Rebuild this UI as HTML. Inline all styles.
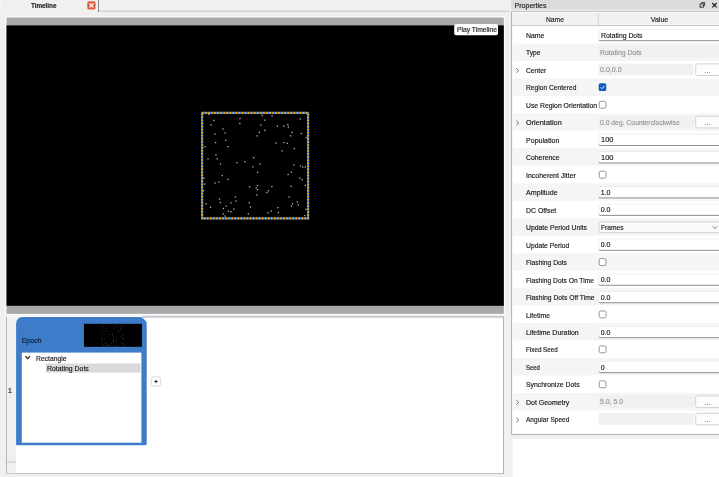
<!DOCTYPE html><html><head><meta charset="utf-8"><title>Timeline</title><style>*{box-sizing:border-box;margin:0;padding:0}
html,body{width:719px;height:477px;overflow:hidden;background:#f0f0f0}
body{position:relative;font-family:"Liberation Sans",sans-serif;font-size:7px;color:#161616;line-height:1;-webkit-text-stroke:0.15px currentColor}
.bg{position:absolute;left:0;top:0}
.txt{position:absolute;left:0;top:0;width:719px;height:477px;will-change:transform}
.t{position:absolute;white-space:nowrap;font-size:7px;transform-origin:0 50%}
.tabt{left:31.1px;top:2.2px;font-weight:bold;color:#222;transform:scaleX(.9)}
.playt{left:456.6px;top:26.2px;color:#1a1a1a;transform:scaleX(.963)}
.epocht{left:21.7px;top:337px;color:#0c1a30}
.r1{left:35.6px;top:354.6px;transform:scaleX(.965)}
.r2{left:47.4px;top:364.8px;transform:scaleX(.985)}
.one{left:8px;top:386.6px}
.dots{position:absolute;left:0;top:0;pointer-events:none}
/* properties */
.lbl{left:525.6px;color:#161616}
.val{left:600.7px;color:#161616}
.val.off{left:600.4px;color:#8e8e8e;-webkit-text-stroke:0.1px currentColor}
.dots3{left:704.3px;color:#6a6a6a;letter-spacing:0.2px;margin-top:0.4px}
</style></head><body>
<svg class="bg" width="719" height="477" viewBox="0 0 719 477">
<!-- tab bar -->
<rect x="98" y="10.6" width="411.5" height="1.2" fill="#cdcdcd"/>
<rect x="98" y="0" width="1" height="12" fill="#8c8c8c"/>
<rect x="1" y="0" width="1" height="11.5" fill="#fbfbfb"/>
<!-- tab close icon -->
<rect x="87.3" y="1.3" width="8.3" height="8.3" rx="1.6" fill="#e2623f"/>
<path d="M89.5 3.5 L93.4 7.4 M93.4 3.5 L89.5 7.4" stroke="#fff" stroke-width="1.25" fill="none"/>
<!-- preview frame -->
<rect x="5.5" y="16.5" width="499.5" height="298.5" fill="#fdfdfd"/>
<rect x="6.5" y="17.5" width="497.3" height="296.4" fill="#a9a9a9"/>
<rect x="6.5" y="25.4" width="497.3" height="280.4" fill="#000"/>
<!-- play button -->
<rect x="454.2" y="24" width="43.8" height="11.2" rx="2" fill="#fff"/>
<!-- square -->
<rect x="202.1" y="112.9" width="106" height="105.5" fill="none" stroke="#2f7de0" stroke-width="2.1"/>
<rect x="202.1" y="112.9" width="106" height="105.5" fill="none" stroke="#f5a50a" stroke-width="2.1" stroke-dasharray="1.55 1.5"/>
<!-- timeline panel -->
<rect x="6.2" y="316" width="497.7" height="157.9" fill="#a9abb3"/>
<rect x="6.2" y="315.9" width="497.7" height="1" fill="#cfd2d9"/>
<rect x="6.2" y="316.8" width="497.7" height="0.8" fill="#b9bcc5"/>
<rect x="7" y="317.6" width="496" height="155.6" fill="#fff"/>
<rect x="7" y="317.6" width="9" height="155.6" fill="#f0f0f0"/>
<rect x="7" y="461.6" width="9" height="0.8" fill="#b8b8b8"/>
<!-- epoch -->
<rect x="7" y="315.7" width="135" height="2" fill="#fbfbfb"/>
<path d="M16.1 445.2 V324 Q16.1 317 23 317 H140.2 Q143.5 317.6 146.7 322.6 V443.7 Q146.7 445.2 145.2 445.2 Z" fill="#3e7cc9"/>
<rect x="83.9" y="323.8" width="58" height="23" fill="#000"/>
<rect x="21.8" y="352.6" width="119.6" height="90.1" fill="#fff"/>
<rect x="45.7" y="363.5" width="94.8" height="9.1" fill="#d9d9d9"/>
<path d="M25.4 356.1 L27.7 358.6 L30 356.1" fill="none" stroke="#1a1a1a" stroke-width="1.2"/>
<!-- plus button -->
<rect x="151.3" y="376.8" width="9.3" height="9.3" rx="1.8" fill="#fff" stroke="#cfcfcf" stroke-width="0.8"/>
<path d="M154.3 381.5 H157.7 M156 379.8 V383.2" stroke="#222" stroke-width="0.9"/>
</svg>
<div class="txt">
<b class="t tabt">Timeline</b>
<span class="t playt">Play Timeline</span>
<span class="t epocht">Epoch</span>
<span class="t r1">Rectangle</span>
<span class="t r2">Rotating Dots</span>
<span class="t one">1</span>

<svg class="dots" width="719" height="477" viewBox="0 0 719 477"><rect x="208.4" y="113.8" width="1.3" height="1.3" fill="#b4b4b4"/><rect x="213.3" y="119.9" width="1.3" height="1.3" fill="#b4b4b4"/><rect x="210.4" y="124.3" width="1.3" height="1.3" fill="#b4b4b4"/><rect x="239.4" y="117.8" width="1.3" height="1.3" fill="#b4b4b4"/><rect x="239.2" y="122.8" width="1.3" height="1.3" fill="#b4b4b4"/><rect x="222.2" y="128.3" width="1.3" height="1.3" fill="#b4b4b4"/><rect x="224.5" y="132.2" width="1.3" height="1.3" fill="#b4b4b4"/><rect x="214.3" y="133.3" width="1.3" height="1.3" fill="#b4b4b4"/><rect x="256.5" y="135.2" width="1.3" height="1.3" fill="#b4b4b4"/><rect x="225.2" y="139.7" width="1.3" height="1.3" fill="#b4b4b4"/><rect x="214.9" y="141.9" width="1.3" height="1.3" fill="#b4b4b4"/><rect x="204.2" y="146.0" width="1.3" height="1.3" fill="#b4b4b4"/><rect x="227.2" y="146.0" width="1.3" height="1.3" fill="#b4b4b4"/><rect x="215.3" y="154.2" width="1.3" height="1.3" fill="#b4b4b4"/><rect x="207.4" y="158.2" width="1.3" height="1.3" fill="#b4b4b4"/><rect x="216.5" y="158.2" width="1.3" height="1.3" fill="#b4b4b4"/><rect x="253.0" y="157.0" width="1.3" height="1.3" fill="#b4b4b4"/><rect x="244.2" y="161.0" width="1.3" height="1.3" fill="#b4b4b4"/><rect x="236.3" y="162.0" width="1.3" height="1.3" fill="#b4b4b4"/><rect x="219.8" y="163.5" width="1.3" height="1.3" fill="#b4b4b4"/><rect x="252.3" y="166.2" width="1.3" height="1.3" fill="#b4b4b4"/><rect x="261.6" y="114.8" width="1.3" height="1.3" fill="#b4b4b4"/><rect x="271.5" y="115.1" width="1.3" height="1.3" fill="#b4b4b4"/><rect x="264.1" y="119.5" width="1.3" height="1.3" fill="#b4b4b4"/><rect x="299.6" y="118.2" width="1.3" height="1.3" fill="#b4b4b4"/><rect x="260.2" y="124.3" width="1.3" height="1.3" fill="#b4b4b4"/><rect x="276.7" y="125.5" width="1.3" height="1.3" fill="#b4b4b4"/><rect x="283.2" y="125.5" width="1.3" height="1.3" fill="#b4b4b4"/><rect x="287.2" y="124.0" width="1.3" height="1.3" fill="#b4b4b4"/><rect x="287.7" y="126.4" width="1.3" height="1.3" fill="#b4b4b4"/><rect x="264.2" y="129.7" width="1.3" height="1.3" fill="#b4b4b4"/><rect x="258.7" y="131.7" width="1.3" height="1.3" fill="#b4b4b4"/><rect x="291.4" y="131.7" width="1.3" height="1.3" fill="#b4b4b4"/><rect x="300.6" y="132.8" width="1.3" height="1.3" fill="#b4b4b4"/><rect x="289.9" y="135.2" width="1.3" height="1.3" fill="#b4b4b4"/><rect x="305.6" y="136.9" width="1.3" height="1.3" fill="#b4b4b4"/><rect x="275.2" y="142.5" width="1.3" height="1.3" fill="#b4b4b4"/><rect x="283.2" y="141.9" width="1.3" height="1.3" fill="#b4b4b4"/><rect x="286.6" y="142.7" width="1.3" height="1.3" fill="#b4b4b4"/><rect x="293.7" y="147.9" width="1.3" height="1.3" fill="#b4b4b4"/><rect x="281.5" y="150.2" width="1.3" height="1.3" fill="#b4b4b4"/><rect x="259.2" y="163.3" width="1.3" height="1.3" fill="#b4b4b4"/><rect x="293.2" y="164.2" width="1.3" height="1.3" fill="#b4b4b4"/><rect x="299.9" y="165.2" width="1.3" height="1.3" fill="#b4b4b4"/><rect x="302.1" y="166.4" width="1.3" height="1.3" fill="#b4b4b4"/><rect x="304.6" y="166.4" width="1.3" height="1.3" fill="#b4b4b4"/><rect x="256.9" y="171.8" width="1.3" height="1.3" fill="#b4b4b4"/><rect x="221.5" y="174.9" width="1.3" height="1.3" fill="#b4b4b4"/><rect x="203.3" y="177.4" width="1.3" height="1.3" fill="#b4b4b4"/><rect x="227.2" y="178.8" width="1.3" height="1.3" fill="#b4b4b4"/><rect x="214.3" y="182.4" width="1.3" height="1.3" fill="#b4b4b4"/><rect x="218.2" y="181.5" width="1.3" height="1.3" fill="#b4b4b4"/><rect x="204.2" y="183.4" width="1.3" height="1.3" fill="#b4b4b4"/><rect x="248.9" y="186.2" width="1.3" height="1.3" fill="#b4b4b4"/><rect x="256.8" y="184.9" width="1.3" height="1.3" fill="#b4b4b4"/><rect x="255.5" y="187.2" width="1.3" height="1.3" fill="#b4b4b4"/><rect x="256.9" y="188.8" width="1.3" height="1.3" fill="#b4b4b4"/><rect x="203.0" y="190.2" width="1.3" height="1.3" fill="#b4b4b4"/><rect x="256.2" y="194.4" width="1.3" height="1.3" fill="#b4b4b4"/><rect x="234.8" y="196.3" width="1.3" height="1.3" fill="#b4b4b4"/><rect x="218.9" y="198.4" width="1.3" height="1.3" fill="#b4b4b4"/><rect x="235.3" y="200.4" width="1.3" height="1.3" fill="#b4b4b4"/><rect x="219.7" y="201.9" width="1.3" height="1.3" fill="#b4b4b4"/><rect x="230.3" y="202.2" width="1.3" height="1.3" fill="#b4b4b4"/><rect x="248.7" y="201.9" width="1.3" height="1.3" fill="#b4b4b4"/><rect x="205.5" y="203.2" width="1.3" height="1.3" fill="#b4b4b4"/><rect x="225.4" y="205.4" width="1.3" height="1.3" fill="#b4b4b4"/><rect x="249.8" y="206.3" width="1.3" height="1.3" fill="#b4b4b4"/><rect x="209.9" y="206.7" width="1.3" height="1.3" fill="#b4b4b4"/><rect x="222.8" y="207.8" width="1.3" height="1.3" fill="#b4b4b4"/><rect x="233.2" y="208.5" width="1.3" height="1.3" fill="#b4b4b4"/><rect x="227.8" y="210.4" width="1.3" height="1.3" fill="#b4b4b4"/><rect x="230.4" y="211.0" width="1.3" height="1.3" fill="#b4b4b4"/><rect x="222.5" y="213.2" width="1.3" height="1.3" fill="#b4b4b4"/><rect x="247.7" y="213.2" width="1.3" height="1.3" fill="#b4b4b4"/><rect x="224.3" y="215.4" width="1.3" height="1.3" fill="#b4b4b4"/><rect x="290.8" y="171.5" width="1.3" height="1.3" fill="#b4b4b4"/><rect x="287.5" y="173.9" width="1.3" height="1.3" fill="#b4b4b4"/><rect x="299.2" y="177.4" width="1.3" height="1.3" fill="#b4b4b4"/><rect x="301.5" y="179.0" width="1.3" height="1.3" fill="#b4b4b4"/><rect x="271.2" y="185.9" width="1.3" height="1.3" fill="#b4b4b4"/><rect x="290.5" y="185.7" width="1.3" height="1.3" fill="#b4b4b4"/><rect x="304.6" y="184.8" width="1.3" height="1.3" fill="#b4b4b4"/><rect x="267.9" y="190.2" width="1.3" height="1.3" fill="#b4b4b4"/><rect x="266.2" y="191.9" width="1.3" height="1.3" fill="#b4b4b4"/><rect x="288.5" y="196.3" width="1.3" height="1.3" fill="#b4b4b4"/><rect x="296.7" y="201.3" width="1.3" height="1.3" fill="#b4b4b4"/><rect x="291.8" y="203.2" width="1.3" height="1.3" fill="#b4b4b4"/><rect x="297.7" y="204.2" width="1.3" height="1.3" fill="#b4b4b4"/><rect x="290.8" y="205.4" width="1.3" height="1.3" fill="#b4b4b4"/><rect x="277.2" y="207.0" width="1.3" height="1.3" fill="#b4b4b4"/><rect x="270.6" y="210.4" width="1.3" height="1.3" fill="#b4b4b4"/><rect x="267.5" y="212.2" width="1.3" height="1.3" fill="#b4b4b4"/><rect x="277.8" y="211.8" width="1.3" height="1.3" fill="#b4b4b4"/><rect x="305.2" y="208.7" width="1.3" height="1.3" fill="#b4b4b4"/><rect x="304.2" y="214.9" width="1.3" height="1.3" fill="#b4b4b4"/><rect x="102.67" y="323.96" width="0.7" height="0.7" fill="#fff" fill-opacity="0.3"/><rect x="103.10" y="326.24" width="0.7" height="0.7" fill="#fff" fill-opacity="0.3"/><rect x="109.33" y="325.91" width="0.7" height="0.7" fill="#fff" fill-opacity="0.3"/><rect x="106.16" y="327.93" width="0.7" height="0.7" fill="#fff" fill-opacity="0.3"/><rect x="113.08" y="328.58" width="0.7" height="0.7" fill="#fff" fill-opacity="0.3"/><rect x="104.08" y="330.06" width="0.7" height="0.7" fill="#fff" fill-opacity="0.3"/><rect x="106.75" y="330.95" width="0.7" height="0.7" fill="#fff" fill-opacity="0.3"/><rect x="102.45" y="333.60" width="0.7" height="0.7" fill="#fff" fill-opacity="0.3"/><rect x="112.35" y="333.34" width="0.7" height="0.7" fill="#fff" fill-opacity="0.3"/><rect x="108.72" y="334.42" width="0.7" height="0.7" fill="#fff" fill-opacity="0.3"/><rect x="112.19" y="335.33" width="0.7" height="0.7" fill="#fff" fill-opacity="0.3"/><rect x="116.34" y="324.24" width="0.7" height="0.7" fill="#fff" fill-opacity="0.3"/><rect x="122.44" y="324.92" width="0.7" height="0.7" fill="#fff" fill-opacity="0.3"/><rect x="117.47" y="326.50" width="0.7" height="0.7" fill="#fff" fill-opacity="0.3"/><rect x="119.75" y="326.17" width="0.7" height="0.7" fill="#fff" fill-opacity="0.3"/><rect x="114.78" y="327.39" width="0.7" height="0.7" fill="#fff" fill-opacity="0.3"/><rect x="120.66" y="327.82" width="0.7" height="0.7" fill="#fff" fill-opacity="0.3"/><rect x="120.33" y="328.58" width="0.7" height="0.7" fill="#fff" fill-opacity="0.3"/><rect x="117.14" y="330.19" width="0.7" height="0.7" fill="#fff" fill-opacity="0.3"/><rect x="119.62" y="330.21" width="0.7" height="0.7" fill="#fff" fill-opacity="0.3"/><rect x="118.51" y="331.86" width="0.7" height="0.7" fill="#fff" fill-opacity="0.3"/><rect x="121.07" y="334.90" width="0.7" height="0.7" fill="#fff" fill-opacity="0.3"/><rect x="122.98" y="335.38" width="0.7" height="0.7" fill="#fff" fill-opacity="0.3"/><rect x="113.17" y="336.53" width="0.7" height="0.7" fill="#fff" fill-opacity="0.3"/><rect x="101.56" y="337.76" width="0.7" height="0.7" fill="#fff" fill-opacity="0.3"/><rect x="103.95" y="338.85" width="0.7" height="0.7" fill="#fff" fill-opacity="0.3"/><rect x="101.76" y="339.06" width="0.7" height="0.7" fill="#fff" fill-opacity="0.3"/><rect x="113.15" y="339.39" width="0.7" height="0.7" fill="#fff" fill-opacity="0.3"/><rect x="113.17" y="340.21" width="0.7" height="0.7" fill="#fff" fill-opacity="0.3"/><rect x="113.04" y="341.45" width="0.7" height="0.7" fill="#fff" fill-opacity="0.3"/><rect x="104.95" y="342.32" width="0.7" height="0.7" fill="#fff" fill-opacity="0.3"/><rect x="105.10" y="343.08" width="0.7" height="0.7" fill="#fff" fill-opacity="0.3"/><rect x="111.39" y="343.08" width="0.7" height="0.7" fill="#fff" fill-opacity="0.3"/><rect x="106.36" y="343.84" width="0.7" height="0.7" fill="#fff" fill-opacity="0.3"/><rect x="102.99" y="344.10" width="0.7" height="0.7" fill="#fff" fill-opacity="0.3"/><rect x="108.03" y="344.51" width="0.7" height="0.7" fill="#fff" fill-opacity="0.3"/><rect x="107.44" y="345.05" width="0.7" height="0.7" fill="#fff" fill-opacity="0.3"/><rect x="111.17" y="345.53" width="0.7" height="0.7" fill="#fff" fill-opacity="0.3"/><rect x="120.53" y="336.48" width="0.7" height="0.7" fill="#fff" fill-opacity="0.3"/><rect x="122.35" y="337.76" width="0.7" height="0.7" fill="#fff" fill-opacity="0.3"/><rect x="116.30" y="339.61" width="0.7" height="0.7" fill="#fff" fill-opacity="0.3"/><rect x="123.52" y="339.35" width="0.7" height="0.7" fill="#fff" fill-opacity="0.3"/><rect x="115.19" y="340.91" width="0.7" height="0.7" fill="#fff" fill-opacity="0.3"/><rect x="121.81" y="342.95" width="0.7" height="0.7" fill="#fff" fill-opacity="0.3"/><rect x="122.02" y="343.56" width="0.7" height="0.7" fill="#fff" fill-opacity="0.3"/><rect x="117.58" y="344.19" width="0.7" height="0.7" fill="#fff" fill-opacity="0.3"/><rect x="115.47" y="345.31" width="0.7" height="0.7" fill="#fff" fill-opacity="0.3"/><rect x="123.65" y="344.53" width="0.7" height="0.7" fill="#fff" fill-opacity="0.3"/><rect x="101.6" y="324.1" width="22.8" height="22.6" fill="none" stroke="#a08040" stroke-opacity="0.1" stroke-width="0.5"/></svg>
<svg class="bg" width="719" height="477" viewBox="0 0 719 477">
<!-- title bar -->
<rect x="511.2" y="0" width="208" height="9.7" fill="#dcdcdc"/>
<path d="M701.7 3.6 V2.5 H704.6 V5.6 H703.4" fill="none" stroke="#2a2a2a" stroke-width="0.9"/>
<rect x="700.1" y="3.9" width="3.2" height="3.3" fill="none" stroke="#2a2a2a" stroke-width="0.9"/>
<path d="M712.3 3 L716.6 7.3 M716.6 3 L712.3 7.3" stroke="#1e1e1e" stroke-width="1.15" fill="none"/>
<!-- table frame -->
<rect x="511.2" y="11.2" width="210" height="423.6" fill="#a4a7ae"/>
<rect x="511.2" y="10.8" width="210" height="1.6" fill="#c6c9d1"/>
<rect x="512.1" y="12.1" width="209" height="421.8" fill="#fff"/>
<!-- header -->
<rect x="512.1" y="13.2" width="207" height="11.5" fill="#f1f1f1"/>
<rect x="512.1" y="25" width="207" height="1" fill="#c9c9c9"/>
<rect x="597.8" y="12.9" width="1" height="12.1" fill="#d4d4d4"/>
<!-- description box -->
<rect x="511.6" y="437.6" width="210" height="45" fill="#e6e6e6"/>
<rect x="512.4" y="438.4" width="210" height="45" fill="#fff"/>

<rect x="598.6" y="29.05" width="125" height="12.0" rx="1.5" fill="#e6e6e6"/>
<rect x="599.3" y="29.65" width="125" height="10.9" rx="1" fill="#fff"/>
<path d="M598.9 39.80 q0.3 0.9 1.3 0.9 H722" fill="none" stroke="#8a8a8a" stroke-width="0.95"/>
<rect x="512.1" y="43.52" width="207" height="17.47" fill="#f5f5f5"/>
<rect x="598.6" y="46.12" width="125" height="11.8" fill="#f0f0f0"/>
<path d="M516.3 68.29 L518.7 70.59 L516.3 72.89" fill="none" stroke="#686868" stroke-width="0.95"/>
<rect x="598.6" y="63.59" width="95.1" height="11.8" fill="#f0f0f0"/>
<rect x="695.7" y="63.89" width="26" height="11.6" rx="2" fill="#fdfdfd" stroke="#cdcdcd" stroke-width="0.9"/>
<rect x="512.1" y="78.46" width="207" height="17.47" fill="#f5f5f5"/>
<rect x="598.7" y="83.36" width="7.6" height="7.7" rx="1.6" fill="#0b5fc0"/>
<path d="M600.60 87.36 l1.35 1.35 l2.5 -2.8" fill="none" stroke="#fff" stroke-width="0.9"/>
<rect x="599.2" y="101.33" width="6.8" height="6.9" rx="1.5" fill="#fff" stroke="#8a8a8a" stroke-width="0.9"/>
<rect x="512.1" y="113.40" width="207" height="17.47" fill="#f5f5f5"/>
<path d="M516.3 120.70 L518.7 123.00 L516.3 125.30" fill="none" stroke="#686868" stroke-width="0.95"/>
<rect x="598.6" y="116.00" width="95.1" height="11.8" fill="#f0f0f0"/>
<rect x="695.7" y="116.30" width="26" height="11.6" rx="2" fill="#fdfdfd" stroke="#cdcdcd" stroke-width="0.9"/>
<rect x="598.6" y="133.87" width="125" height="12.0" rx="1.5" fill="#e6e6e6"/>
<rect x="599.3" y="134.47" width="125" height="10.9" rx="1" fill="#fff"/>
<path d="M598.9 144.62 q0.3 0.9 1.3 0.9 H722" fill="none" stroke="#8a8a8a" stroke-width="0.95"/>
<rect x="512.1" y="148.34" width="207" height="17.47" fill="#f5f5f5"/>
<rect x="598.6" y="151.34" width="125" height="12.0" rx="1.5" fill="#e6e6e6"/>
<rect x="599.3" y="151.94" width="125" height="10.9" rx="1" fill="#fff"/>
<path d="M598.9 162.09 q0.3 0.9 1.3 0.9 H722" fill="none" stroke="#8a8a8a" stroke-width="0.95"/>
<rect x="599.2" y="171.21" width="6.8" height="6.9" rx="1.5" fill="#fff" stroke="#8a8a8a" stroke-width="0.9"/>
<rect x="512.1" y="183.28" width="207" height="17.47" fill="#f5f5f5"/>
<rect x="598.6" y="186.28" width="125" height="12.0" rx="1.5" fill="#e6e6e6"/>
<rect x="599.3" y="186.88" width="125" height="10.9" rx="1" fill="#fff"/>
<path d="M598.9 197.03 q0.3 0.9 1.3 0.9 H722" fill="none" stroke="#8a8a8a" stroke-width="0.95"/>
<rect x="598.6" y="203.75" width="125" height="12.0" rx="1.5" fill="#e6e6e6"/>
<rect x="599.3" y="204.35" width="125" height="10.9" rx="1" fill="#fff"/>
<path d="M598.9 214.50 q0.3 0.9 1.3 0.9 H722" fill="none" stroke="#8a8a8a" stroke-width="0.95"/>
<rect x="512.1" y="218.22" width="207" height="17.47" fill="#f5f5f5"/>
<rect x="599.0" y="221.92" width="125" height="10.6" rx="1.5" fill="#f9f9f9" stroke="#cfcfcf" stroke-width="0.9"/>
<path d="M712.6 226.32 L715 228.62 L717.4 226.32" fill="none" stroke="#666" stroke-width="0.8"/>
<rect x="598.6" y="238.69" width="125" height="12.0" rx="1.5" fill="#e6e6e6"/>
<rect x="599.3" y="239.29" width="125" height="10.9" rx="1" fill="#fff"/>
<path d="M598.9 249.44 q0.3 0.9 1.3 0.9 H722" fill="none" stroke="#8a8a8a" stroke-width="0.95"/>
<rect x="512.1" y="253.16" width="207" height="17.47" fill="#f5f5f5"/>
<rect x="599.2" y="258.56" width="6.8" height="6.9" rx="1.5" fill="#fff" stroke="#8a8a8a" stroke-width="0.9"/>
<rect x="598.6" y="273.63" width="125" height="12.0" rx="1.5" fill="#e6e6e6"/>
<rect x="599.3" y="274.23" width="125" height="10.9" rx="1" fill="#fff"/>
<path d="M598.9 284.38 q0.3 0.9 1.3 0.9 H722" fill="none" stroke="#8a8a8a" stroke-width="0.95"/>
<rect x="512.1" y="288.10" width="207" height="17.47" fill="#f5f5f5"/>
<rect x="598.6" y="291.10" width="125" height="12.0" rx="1.5" fill="#e6e6e6"/>
<rect x="599.3" y="291.70" width="125" height="10.9" rx="1" fill="#fff"/>
<path d="M598.9 301.85 q0.3 0.9 1.3 0.9 H722" fill="none" stroke="#8a8a8a" stroke-width="0.95"/>
<rect x="599.2" y="310.97" width="6.8" height="6.9" rx="1.5" fill="#fff" stroke="#8a8a8a" stroke-width="0.9"/>
<rect x="512.1" y="323.04" width="207" height="17.47" fill="#f5f5f5"/>
<rect x="598.6" y="326.04" width="125" height="12.0" rx="1.5" fill="#e6e6e6"/>
<rect x="599.3" y="326.64" width="125" height="10.9" rx="1" fill="#fff"/>
<path d="M598.9 336.79 q0.3 0.9 1.3 0.9 H722" fill="none" stroke="#8a8a8a" stroke-width="0.95"/>
<rect x="599.2" y="345.91" width="6.8" height="6.9" rx="1.5" fill="#fff" stroke="#8a8a8a" stroke-width="0.9"/>
<rect x="512.1" y="357.98" width="207" height="17.47" fill="#f5f5f5"/>
<rect x="598.6" y="360.98" width="125" height="12.0" rx="1.5" fill="#e6e6e6"/>
<rect x="599.3" y="361.58" width="125" height="10.9" rx="1" fill="#fff"/>
<path d="M598.9 371.73 q0.3 0.9 1.3 0.9 H722" fill="none" stroke="#8a8a8a" stroke-width="0.95"/>
<rect x="599.2" y="380.85" width="6.8" height="6.9" rx="1.5" fill="#fff" stroke="#8a8a8a" stroke-width="0.9"/>
<rect x="512.1" y="392.92" width="207" height="17.47" fill="#f5f5f5"/>
<path d="M516.3 400.22 L518.7 402.52 L516.3 404.82" fill="none" stroke="#686868" stroke-width="0.95"/>
<rect x="598.6" y="395.52" width="95.1" height="11.8" fill="#f0f0f0"/>
<rect x="695.7" y="395.82" width="26" height="11.6" rx="2" fill="#fdfdfd" stroke="#cdcdcd" stroke-width="0.9"/>
<path d="M516.3 417.69 L518.7 419.99 L516.3 422.29" fill="none" stroke="#686868" stroke-width="0.95"/>
<rect x="598.6" y="412.99" width="95.1" height="11.8" fill="#f0f0f0"/>
<rect x="695.7" y="413.29" width="26" height="11.6" rx="2" fill="#fdfdfd" stroke="#cdcdcd" stroke-width="0.9"/>
</svg>
<span class="t" style="left:514.6px;top:1.8px;color:#222">Properties</span>
<span class="t" style="left:546.1px;top:15.5px;color:#222;transform:scaleX(.96)">Name</span>
<span class="t" style="left:650.8px;top:15.5px;color:#222">Value</span>
<span class="t lbl" style="top:32.00px;transform:scaleX(0.988)">Name</span>
<span class="t val" style="top:31.60px;transform:scaleX(0.978)">Rotating Dots</span>
<span class="t lbl" style="top:49.47px;transform:scaleX(0.947)">Type</span>
<span class="t val off" style="top:48.82px;transform:scaleX(0.978)">Rotating Dots</span>
<span class="t lbl" style="top:66.94px;transform:scaleX(0.963)">Center</span>
<span class="t val off" style="top:66.09px;transform:scaleX(1.010)">0.0,0.0</span>
<span class="t dots3" style="top:66.59px">...</span>
<span class="t lbl" style="top:84.41px;transform:scaleX(0.952)">Region Centered</span>
<span class="t lbl" style="top:101.88px;transform:scaleX(0.976)">Use Region Orientation</span>
<span class="t lbl" style="top:119.35px;transform:scaleX(1.043)">Orientation</span>
<span class="t val off" style="top:118.50px;transform:scaleX(0.971)">0.0 deg. Counterclockwise</span>
<span class="t dots3" style="top:119.00px">...</span>
<span class="t lbl" style="top:136.82px;transform:scaleX(1.008)">Population</span>
<span class="t val" style="top:136.42px;transform:scaleX(1.063)">100</span>
<span class="t lbl" style="top:154.29px;transform:scaleX(0.982)">Coherence</span>
<span class="t val" style="top:153.89px;transform:scaleX(1.063)">100</span>
<span class="t lbl" style="top:171.76px;transform:scaleX(0.994)">Incoherent Jitter</span>
<span class="t lbl" style="top:189.23px;transform:scaleX(1.020)">Amplitude</span>
<span class="t val" style="top:188.83px;transform:scaleX(1.000)">1.0</span>
<span class="t lbl" style="top:206.70px;transform:scaleX(0.989)">DC Offset</span>
<span class="t val" style="top:206.30px;transform:scaleX(1.000)">0.0</span>
<span class="t lbl" style="top:224.17px;transform:scaleX(0.974)">Update Period Units</span>
<span class="t val" style="left:601.1px;top:223.82px;transform:scaleX(0.949)">Frames</span>
<span class="t lbl" style="top:241.64px;transform:scaleX(0.969)">Update Period</span>
<span class="t val" style="top:241.24px;transform:scaleX(1.000)">0.0</span>
<span class="t lbl" style="top:259.11px;transform:scaleX(0.955)">Flashing Dots</span>
<span class="t lbl" style="top:276.58px;transform:scaleX(0.954)">Flashing Dots On Time</span>
<span class="t val" style="top:276.18px;transform:scaleX(1.000)">0.0</span>
<span class="t lbl" style="top:294.05px;transform:scaleX(0.964)">Flashing Dots Off Time</span>
<span class="t val" style="top:293.65px;transform:scaleX(1.000)">0.0</span>
<span class="t lbl" style="top:311.52px;transform:scaleX(0.979)">Lifetime</span>
<span class="t lbl" style="top:328.99px;transform:scaleX(0.996)">Lifetime Duration</span>
<span class="t val" style="top:328.59px;transform:scaleX(1.000)">0.0</span>
<span class="t lbl" style="top:346.46px;transform:scaleX(0.898)">Fixed Seed</span>
<span class="t lbl" style="top:363.93px;transform:scaleX(0.853)">Seed</span>
<span class="t val" style="top:363.53px;transform:scaleX(1.000)">0</span>
<span class="t lbl" style="top:381.40px;transform:scaleX(0.976)">Synchronize Dots</span>
<span class="t lbl" style="top:398.87px;transform:scaleX(0.995)">Dot Geometry</span>
<span class="t val off" style="top:398.02px;transform:scaleX(0.994)">5.0, 5.0</span>
<span class="t dots3" style="top:398.52px">...</span>
<span class="t lbl" style="top:416.34px;transform:scaleX(0.936)">Angular Speed</span>
<span class="t dots3" style="top:415.99px">...</span>
</div>
</body></html>
